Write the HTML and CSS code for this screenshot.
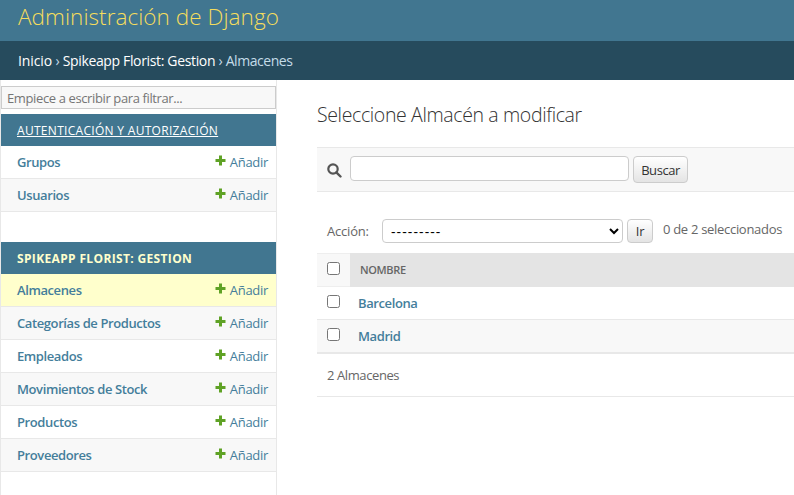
FILE: index.html
```html
<!DOCTYPE html>
<html lang="es">
<head>
<meta charset="utf-8">
<title>Administración de Django</title>
<link rel="stylesheet" href="styles.css">
</head>
<body>
<svg width="0" height="0" class="defs"><symbol id="plus" viewBox="0 0 11 11"><path d="M4 .5h3V4h3.500v3H7v3.500H4V7H.5V4H4z" fill="#5fa225"/></symbol></svg>
<header class="header"><h1>Administración de Django</h1></header>
<nav class="breadcrumbs"><a>Inicio</a> › <a class="app">Spikeapp Florist: Gestion</a> › <span>Almacenes</span></nav>
<div class="main">
  <aside class="sidebar">
    <input class="filter" type="text" placeholder="Empiece a escribir para filtrar...">
    <section class="module">
      <h2 class="auth"><a>Autenticación y autorización</a></h2>
      <div class="row"><b>Grupos</b><a><svg><use href="#plus"/></svg><span>Añadir</span></a></div>
      <div class="row"><b>Usuarios</b><a><svg><use href="#plus"/></svg><span>Añadir</span></a></div>
    </section>
    <section class="module">
      <h2 class="current"><a>Spikeapp Florist: Gestion</a></h2>
      <div class="row selected"><b>Almacenes</b><a><svg><use href="#plus"/></svg><span>Añadir</span></a></div>
      <div class="row"><b>Categorías de Productos</b><a><svg><use href="#plus"/></svg><span>Añadir</span></a></div>
      <div class="row"><b>Empleados</b><a><svg><use href="#plus"/></svg><span>Añadir</span></a></div>
      <div class="row"><b>Movimientos de Stock</b><a><svg><use href="#plus"/></svg><span>Añadir</span></a></div>
      <div class="row"><b>Productos</b><a><svg><use href="#plus"/></svg><span>Añadir</span></a></div>
      <div class="row"><b>Proveedores</b><a><svg><use href="#plus"/></svg><span>Añadir</span></a></div>
    </section>
  </aside>
  <main class="content">
    <h1>Seleccione Almacén a modificar</h1>
    <form class="toolbar">
      <svg class="search" viewBox="0 0 15 15"><circle cx="6" cy="6" r="4.700" fill="none" stroke="#555" stroke-width="2.200"/><path d="M9.300 9.300l4.200 4.200" stroke="#555" stroke-width="2.400" stroke-linecap="round"/></svg>
      <input type="text"><button type="button">Buscar</button>
    </form>
    <div class="actions">
      <label>Acción:</label>
      <select><option>---------</option></select>
      <button type="button">Ir</button>
      <span>0 de 2 seleccionados</span>
    </div>
    <div class="table">
      <div class="thead"><div class="check"><input type="checkbox"></div><div class="name">Nombre</div></div>
      <div class="tr"><div class="check"><input type="checkbox"></div><b>Barcelona</b></div>
      <div class="tr even"><div class="check"><input type="checkbox"></div><b>Madrid</b></div>
    </div>
    <p class="paginator">2 Almacenes</p>
  </main>
</div>
</body>
</html>
```
FILE: styles.css
```css
* { box-sizing: border-box; }
html, body { height: 100%; }
body {
  margin: 0;
  display: flex;
  flex-direction: column;
  overflow: hidden;
  background: #fff;
  color: #666;
  font: 13px/16px "Segoe UI", "Open Sans", sans-serif;
  letter-spacing: -0.3px;
  white-space: nowrap;
}
.defs { position: absolute; }
h1, h2, p { margin: 0; font-weight: 400; }
input, button, select { margin: 0; font: inherit; letter-spacing: inherit; }
.header { flex: none; height: 41px; padding: 3px 18px 0; background: #417690; }
.header h1 { color: #f5dd5d; font-size: 22.5px; line-height: 28px; font-weight: 300; letter-spacing: 0.05px; }
.breadcrumbs { flex: none; height: 39px; padding: 12px 18px 0; background: #264b5d; color: #c4dce8; font-size: 14px; }
.breadcrumbs a { color: #fff; letter-spacing: -0.1px; }
.breadcrumbs .app { letter-spacing: -0.35px; }
.breadcrumbs span { letter-spacing: -0.45px; }
.main { flex: 1; display: flex; min-height: 0; }
.sidebar { flex: none; width: 277px; padding-top: 6px; border: solid #e8e8e8; border-width: 0 1px; }
.filter { display: block; width: 275px; height: 23px; margin-bottom: 5px; padding: 1px 5px; border: 1px solid #ccc; background: #f8f8f8; letter-spacing: -0.38px; }
.filter::placeholder { color: #757575; }
.module { margin-bottom: 30px; }
.module h2 { height: 32px; padding: 9px 16px 0; background: #417690; color: #fff; font-size: 12px; letter-spacing: 0.3px; text-transform: uppercase; }
.auth a { text-decoration: underline; }
.module .current { color: #ffc; font-weight: 700; letter-spacing: 0.35px; }
.row { display: flex; justify-content: space-between; height: 33px; padding: 8px 8px 0 16px; border-bottom: 1px solid #e8e8e8; }
.row:nth-child(odd) { background: #f8f8f8; }
.row.selected { background: #ffc; }
.row b, .tr b { color: #447e9b; font-weight: 600; letter-spacing: -0.4px; }
.row a { display: flex; gap: 4px; color: #447e9b; }
.row svg { width: 11px; height: 11px; margin-top: 1px; }
.content { flex: 1; min-width: 0; padding: 23px 0 0 40px; }
.content h1 { height: 44px; color: #333; font-size: 19.500px; line-height: 24px; font-weight: 300; letter-spacing: -0.37px; }
.toolbar { display: flex; align-items: flex-start; height: 45px; padding: 8px 10px; border: solid #e8e8e8; border-width: 1px 0; background: #f8f8f8; }
.search { width: 15px; height: 15px; margin: 7px 8px 0 0; }
.toolbar input { width: 279px; height: 25px; margin-right: 4px; border: 1px solid #ccc; border-radius: 4px; background: #fff; }
button { height: 27px; padding: 1px 0 0; border: 1px solid #ccc; border-radius: 4px; background: linear-gradient(#fff, #e4e4e4); color: #333; }
.toolbar button { width: 55px; letter-spacing: -0.45px; }
.actions { display: flex; height: 61px; padding: 27px 0 0 10px; }
.actions label { width: 55px; padding-top: 4px; letter-spacing: -0.2px; }
.actions select { width: 241px; height: 24px; margin-right: 4px; padding: 0 4px; border: 1px solid #ccc; border-radius: 4px; background: #fff; color: #000; font-size: 14px; letter-spacing: 1.100px; }
.actions button { width: 26px; height: 24px; margin-right: 10px; padding: 0; }
.actions span { padding-top: 2px; }
.thead { display: flex; height: 34px; background: #e4e4e4; }
.check { width: 33px; padding: 8px 10px 0; }
.thead .check { border: solid #eee; border-width: 1px 0; background: #f8f8f8; }
.check input { display: block; width: 13px; height: 13px; }
.name { padding: 9px 10px 0; font-size: 11px; font-weight: 600; letter-spacing: -0.35px; text-transform: uppercase; }
.tr { display: flex; height: 33px; border-bottom: 1px solid #e8e8e8; }
.tr b { padding: 8px 8px 0; }
.tr.even { background: #f8f8f8; }
.paginator { height: 44px; padding: 13px 10px 0; border: solid #e8e8e8; border-width: 1px 0; letter-spacing: -0.4px; }
```
